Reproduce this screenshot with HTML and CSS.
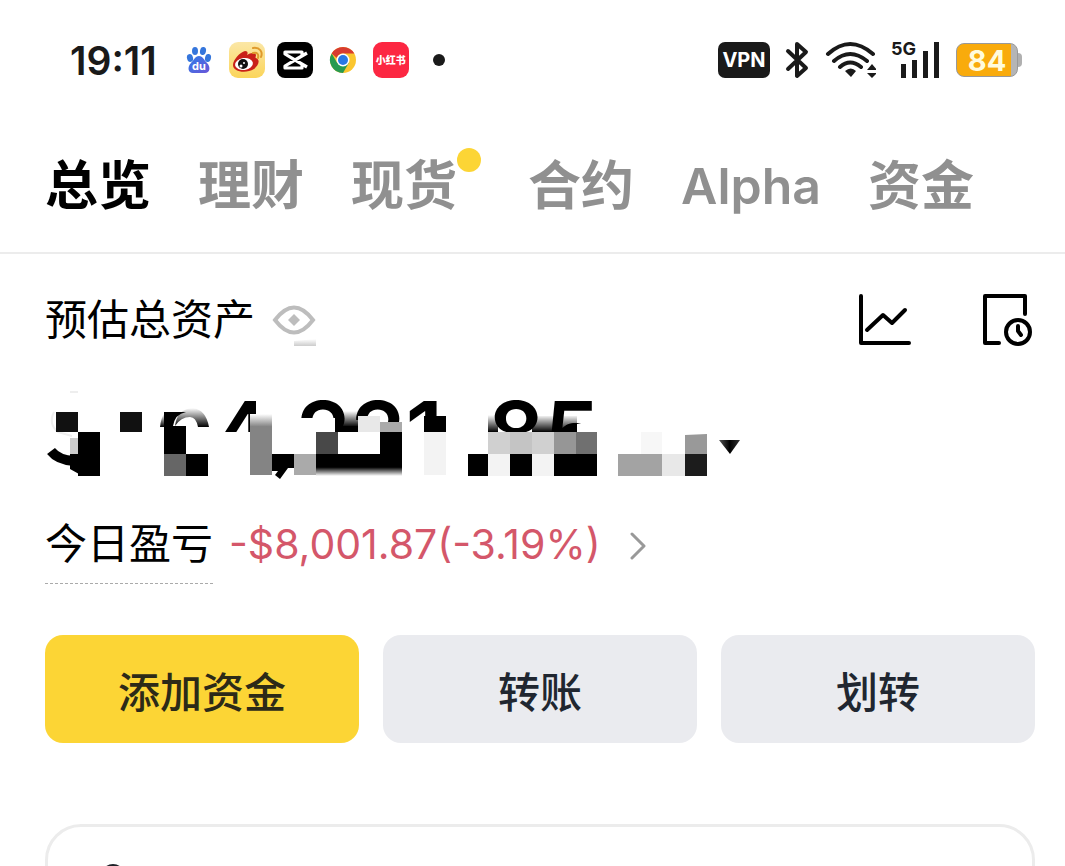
FILE: index.html
```html
<!DOCTYPE html>
<html lang="zh-CN">
    <head>
        <meta charset="utf-8">
        <meta name="viewport" content="width=device-width, initial-scale=1">
        <title>总览</title>
        <link rel="stylesheet" href="styles.css">
    </head>
    <body>
        <div class="status_bar">
            <div class="status_left">
                <span class="time">19:11</span>
                <div class="apps">
                    <svg class="app" viewBox="0 0 36 36">
                        <defs>
                            <linearGradient id="paw" x1="0" y1="0" x2="1" y2="1">
                                <stop offset="0" stop-color="#2f7de8"/>
                                <stop offset="1" stop-color="#6a55d8"/>
                            </linearGradient>
                        </defs>
                        <g fill="#3576dc">
                            <ellipse cx="9" cy="16" rx="3" ry="4" transform="rotate(-15 9 16)"/>
                            <ellipse cx="14" cy="9" rx="3" ry="4"/>
                            <ellipse cx="22" cy="9" rx="3" ry="4" transform="rotate(12 22 9)"/>
                            <ellipse cx="27" cy="16" rx="3" ry="4" transform="rotate(12 27 16)"/>
                        </g>
                        <path fill="url(#paw)" d="M18 14c-4 0-5 4-8 7-4 4-3 10 2 10h12c5 0 6-6 2-10-3-3-4-7-8-7z"/>
                        <text class="du" x="18" y="28">du</text>
                    </svg>
                    <svg class="app" viewBox="0 0 36 36">
                        <defs>
                            <linearGradient id="gold" x1="0" y1="0" x2="0" y2="1">
                                <stop offset="0" stop-color="#fbe7a6"/>
                                <stop offset="1" stop-color="#fbd55a"/>
                            </linearGradient>
                        </defs>
                        <rect width="36" height="36" rx="9" fill="url(#gold)"/>
                        <path fill="#c92018" d="M4 23c0-5 7-13 12-14 3 0 3 2 2 4 3-2 8-3 9 0 0 1-1 3 0 3 5 2 2 8-2 11-8 5-21 3-21-4z"/>
                        <ellipse cx="15" cy="22" rx="9" ry="6" fill="#fff" transform="rotate(-8 15 22)"/>
                        <circle cx="14" cy="22" r="5" fill="#111"/>
                        <circle cx="12" cy="24" r="1.5" fill="#fff"/>
                        <circle cx="15" cy="21" r="1" fill="#fff"/>
                        <path fill="none" stroke="#df9a2c" stroke-width="2" stroke-linecap="round" d="M24 11c4-1 6 1 5 5M24 6c7-1 10 4 8 9"/>
                    </svg>
                    <svg class="app" viewBox="0 0 36 36">
                        <rect width="36" height="36" rx="8" fill="#000"/>
                        <path fill="none" stroke="#fff" stroke-width="3.2" stroke-linejoin="round" d="M30 11L18 18 8 24v2h17v-3M30 25L18 18 8 12v-2h17v3"/>
                    </svg>
                    <svg class="app" viewBox="0 0 36 36">
                        <circle cx="18" cy="18" r="13" fill="#fbc62f"/>
                        <path fill="#279a50" d="M6.7 11.5a13 13 0 0 0 11.3 19.5l5.6-9.7L18 18l-5.6 3.3z"/>
                        <path fill="#d83b30" d="M6.7 11.5A13 13 0 0 1 29.3 11.5H18a6.5 6.5 0 0 0-6.2 4.5z"/>
                        <circle cx="18" cy="18" r="6.5" fill="#fff"/>
                        <circle cx="18" cy="18" r="5" fill="#2878e4"/>
                    </svg>
                    <span class="app red_app">小红书</span>
                    <svg class="app" viewBox="0 0 36 36"><circle cx="18" cy="18" r="6" fill="#1a1a1a"/></svg>
                </div>
            </div>
            <div class="status_right">
                <span class="vpn">VPN</span>
                <svg width="24" height="38" viewBox="0 0 24 38">
                    <path class="ink_line" stroke-width="4" d="M3 10l18 17-9 8V3l9 8L3 28"/>
                </svg>
                <svg width="52" height="38" viewBox="0 0 52 38">
                    <path class="ink_line" stroke-width="4" d="M4 13Q26-7 49 13M10 20Q26 6 43 20M16 26Q26 17 37 26"/>
                    <path fill="#1a1a1a" d="M21 30q6-5 11 0l-5 6zM48 23l5 6H43zM48 37l5-5H43z"/>
                </svg>
                <div class="signal">
                    <span class="net">5G</span>
                    <svg width="50" height="38" viewBox="0 0 50 38">
                        <path fill="none" stroke="#1a1a1a" stroke-width="5" d="M12.500 23v14M23.500 19v18M34.500 10v27M45.500 1v36"/>
                    </svg>
                </div>
                <div class="battery"><span class="level">84</span><i class="tip"></i></div>
            </div>
        </div>

        <nav class="tabs">
            <a class="tab active" href="#overview">总览</a>
            <a class="tab" href="#earn">理财</a>
            <a class="tab" href="#spot">现货<i class="dot"></i></a>
            <a class="tab" href="#futures">合约</a>
            <a class="tab latin" href="#alpha">Alpha</a>
            <a class="tab" href="#funding">资金</a>
        </nav>

        <main class="overview">
            <div class="asset_head">
                <h1 class="label">预估总资产</h1>
                <button class="icon_btn eye" aria-label="隐藏资产">
                    <svg width="44" height="56" viewBox="0 0 44 56">
                        <defs>
                            <linearGradient id="smear" x1="0" y1="0" x2="0" y2="1">
                                <stop offset="0" stop-color="#fff"/>
                                <stop offset="1" stop-color="#ccc"/>
                            </linearGradient>
                        </defs>
                        <path fill="none" stroke="#bdbdbd" stroke-width="4" d="M3 28Q22 3 41 28 22 53 3 28z"/>
                        <path fill="#bdbdbd" d="M22 22l6 6-6 6-6-6z"/>
                        <path fill="url(#smear)" d="M22 49l22-2v7H22z"/>
                    </svg>
                </button>
                <div class="tools">
                    <button class="icon_btn" aria-label="走势">
                        <svg width="54" height="54" viewBox="0 0 54 54">
                            <path class="tool_line" d="M3 3v47h48M9 37l16-15 9 8 13-13"/>
                        </svg>
                    </button>
                    <button class="icon_btn" aria-label="历史记录">
                        <svg width="54" height="54" viewBox="0 0 54 54">
                            <path class="tool_line" d="M18 50H4V3h40v18M37 33v5l3 4"/>
                            <circle class="tool_line" cx="37" cy="39" r="12"/>
                        </svg>
                    </button>
                </div>
            </div>

            <!-- balance, covered by mosaic blocks -->
            <svg class="balance" viewBox="45 385 700 100" width="700" height="100">
                <defs>
                    <linearGradient id="down" x1="0" y1="0" x2="0" y2="1">
                        <stop offset="0" stop-color="#000" stop-opacity="0"/>
                        <stop offset="1" stop-color="#000"/>
                    </linearGradient>
                    <linearGradient id="up" x1="0" y1="0" x2="0" y2="1">
                        <stop offset="0.6" stop-color="#000"/>
                        <stop offset="1" stop-color="#000" stop-opacity="0"/>
                    </linearGradient>
                    <linearGradient id="gray_down" x1="0" y1="0" x2="0" y2="1">
                        <stop offset="0" stop-color="#fff"/>
                        <stop offset="0.7" stop-color="#848484"/>
                    </linearGradient>
                    <linearGradient id="tri" x1="0" y1="0" x2="1" y2="0">
                        <stop offset="0" stop-color="#555"/>
                        <stop offset="0.5" stop-color="#000"/>
                        <stop offset="1" stop-color="#333"/>
                    </linearGradient>
                </defs>
                <text class="digits" x="213" y="465">4</text>
                <text class="digits" x="296" y="465">221</text>
                <text class="digits" x="488" y="465">85</text>
                <path fill="#fff" d="M200 432h500v53H200zM256 395h34v37h-34zM299 418h36v14h-36z"/>
                <path fill="none" stroke="#eee" stroke-width="2" d="M54 412q-6 12 4 20l14 4M70 392h8"/>
                <path fill="none" stroke="#000" stroke-width="10" d="M51 451Q58 460 74 461"/>
                <path fill="#111" d="M56 412h22v20H56zM120 412h22v20h-22z"/>
                <path fill="#000" d="M78 432h22v44H78zM70 454h9v20l-9-5z"/>
                <path fill="#ccc" d="M70 438h8v16h-8z"/>
                <path fill="#000" d="M164 412h22v42h-22zM186 454h22v22h-22z"/>
                <path fill="url(#down)" d="M160 427q1-9 4-13v13z"/>
                <path fill="#fff" d="M173 426q2-12 13-14v14z"/>
                <path fill="url(#down)" d="M175 426q2-17 18-18 13 2 16 19h-11q-2-10-8-10-9 0-15 9z"/>
                <path fill="#666" d="M164 454h22v22h-22z"/>
                <path fill="url(#gray_down)" d="M250 414h22v18h-22z"/>
                <path fill="#848484" d="M250 432h22v43h-22z"/>
                <path fill="#000" d="M272 454h22v14h-6l-8 11-5-4 3-4h-6z"/>
                <path fill="#aaa" d="M294 454h22v21h-22zM380 422h22v10h-22z"/>
                <path fill="#484848" d="M316 432h22v22h-22z"/>
                <path fill="url(#down)" d="M338 411h20v16h-20z"/>
                <path fill="#000" d="M338 426h20v6h-20z"/>
                <path fill="#e8e8e8" d="M358 416h22v16h-22z"/>
                <path fill="#000" d="M380 432h22v22h-22z"/>
                <path fill="url(#up)" d="M316 454h86v22h-86z"/>
                <path fill="#000" d="M424 416h22v16h-22zM468 454h20v22h-20zM510 454h22v22h-22zM554 454h43v22h-43z"/>
                <path fill="#f3f3f3" d="M424 432h22v43h-22zM488 454h22v22h-22zM532 454h22v22h-22z"/>
                <path fill="url(#down)" d="M488 415h10v17h-10zM532 416h45v16h-45z"/>
                <path fill="#d0d0d0" d="M488 432h22v22h-22zM532 432h22v22h-22z"/>
                <path fill="#c4c4c4" d="M510 432h22v22h-22z"/>
                <path fill="#969696" d="M554 432h22v22h-22z"/>
                <path fill="#707070" d="M576 432h21v22h-21z"/>
                <path fill="#fff" d="M577 424h22v8h-22z"/>
                <path fill="#a3a3a3" d="M618 454h44v22h-44z"/>
                <path fill="#f7f7f7" d="M641 432h21v22h-21z"/>
                <path fill="#e8e8e8" d="M662 454h23v22h-23z"/>
                <path fill="#999" d="M685 435l22-1v20h-22z"/>
                <path fill="#1c1c1c" d="M685 454h22v22h-22z"/>
                <path fill="url(#tri)" d="M719 440h21l-10 14z"/>
            </svg>

            <div class="pnl">
                <span class="label pnl_label">今日盈亏</span>
                <a class="pnl_value" href="#pnl">-$8,001.87(-3.19%)
                    <svg width="20" height="32" viewBox="0 0 20 32">
                        <path fill="none" stroke="#999" stroke-width="3" stroke-linecap="round" stroke-linejoin="round" d="M3 6l12 12L3 30"/>
                    </svg>
                </a>
            </div>

            <div class="actions">
                <button class="action primary">添加资金</button>
                <button class="action">转账</button>
                <button class="action">划转</button>
            </div>

            <section class="card">
                <svg width="24" height="24" viewBox="0 0 24 24"><circle cx="12" cy="12" r="10" fill="none" stroke="#1e2329" stroke-width="4"/></svg>
            </section>
        </main>
    </body>
</html>
```
FILE: styles.css
```css
*{
    box-sizing: border-box;
}
body{
    margin: 0; height: 100vh; overflow: hidden;
    background-color: #fff; color: #000;
    font-family: Inter, "Noto Sans CJK SC", sans-serif;
}
svg{
    display: block; flex: none;
}
a{
    color: inherit; text-decoration: none;
}
button{
    font-family: inherit; border: 0; padding: 0; cursor: pointer;
}

/* status bar */
.status_bar{
    display: flex; justify-content: space-between; align-items: center;
    height: 120px; padding: 0 43px 0 70px; color: #1a1a1a;
}
.status_left, .apps, .status_right{
    display: flex; align-items: center;
}
.status_left{
    gap: 24px;
}
.apps{
    gap: 12px;
}
.status_right{
    gap: 15px;
}
.time{
    font-size: 39px; font-weight: 600;
}
.app{
    width: 36px; height: 36px;
}
.du{
    font-size: 11px; font-weight: 700; fill: #fff; text-anchor: middle;
}
.red_app{
    border-radius: 9px; background-color: #fc2742; color: #fff;
    font-size: 10px; font-weight: 900; line-height: 36px; text-align: center;
}
.vpn{
    width: 52px; height: 36px; border-radius: 7px; background-color: #1a1a1a; color: #fff;
    font-size: 20px; font-weight: 700; line-height: 36px; text-align: center;
}
.ink_line{
    fill: none; stroke: #1a1a1a; stroke-linecap: round; stroke-linejoin: round;
}
.signal{
    position: relative;
}
.net{
    position: absolute; left: 0; top: -2px; font-size: 18px; line-height: 20px; font-weight: 700;
}
.battery{
    display: flex; align-items: center;
}
.level{
    width: 62px; height: 34px; border: 1px solid #999; border-radius: 8px;
    background: linear-gradient(to right, #f9ab0c 54px, #b5b5b5 54px);
    color: #fffbdc; font-size: 29px; font-weight: 700; line-height: 34px; text-align: center;
}
.tip{
    width: 4px; height: 14px; border-radius: 0 4px 4px 0; background-color: #b0b0b0;
}

/* tabs */
.tabs{
    display: flex; align-items: center; gap: 47px;
    height: 134px; padding: 0 45px; border-bottom: 2px solid #ececec;
}
.tab{
    display: flex; color: #909090; font-size: 53px; line-height: 76px; font-weight: 600; white-space: nowrap;
}
.active{
    color: #000;
}
.latin{
    font-size: 50px;
}
.dot{
    width: 24px; height: 24px; border-radius: 50%; background-color: #fcd535;
}

/* overview */
.overview{
    padding: 38px 30px 0 45px;
}
.asset_head, .tools, .pnl, .pnl_value{
    display: flex; align-items: center;
}
.label{
    margin: 0; font-size: 42px; line-height: 56px; font-weight: 400;
}
.icon_btn{
    background: none;
}
.eye{
    margin-left: 17px;
}
.tools{
    gap: 69px; margin-left: auto;
}
.tool_line{
    fill: none; stroke: #000; stroke-width: 4; stroke-linecap: round; stroke-linejoin: round;
}
.balance{
    margin-top: 37px;
}
.digits{
    font-size: 88px; font-weight: 600;
}
.pnl{
    align-items: flex-start; gap: 16px; margin-top: 31px;
}
.pnl_label{
    height: 68px; border-bottom: 1px dashed #aaa;
}
.pnl_value{
    gap: 28px; color: #d4576a; font-size: 41px; line-height: 56px; white-space: nowrap;
}
.actions{
    display: grid; grid-template-columns: repeat(3, 1fr); gap: 24px; margin-top: 51px;
}
.action{
    height: 108px; border-radius: 18px; background-color: #eaebef; color: #202630;
    font-size: 42px; font-weight: 500;
}
.primary{
    background-color: #fcd535; color: #2c2a18;
}
.card{
    margin-top: 81px; padding: 37px 53px; border: 3px solid #ececec; border-radius: 36px;
}
```
